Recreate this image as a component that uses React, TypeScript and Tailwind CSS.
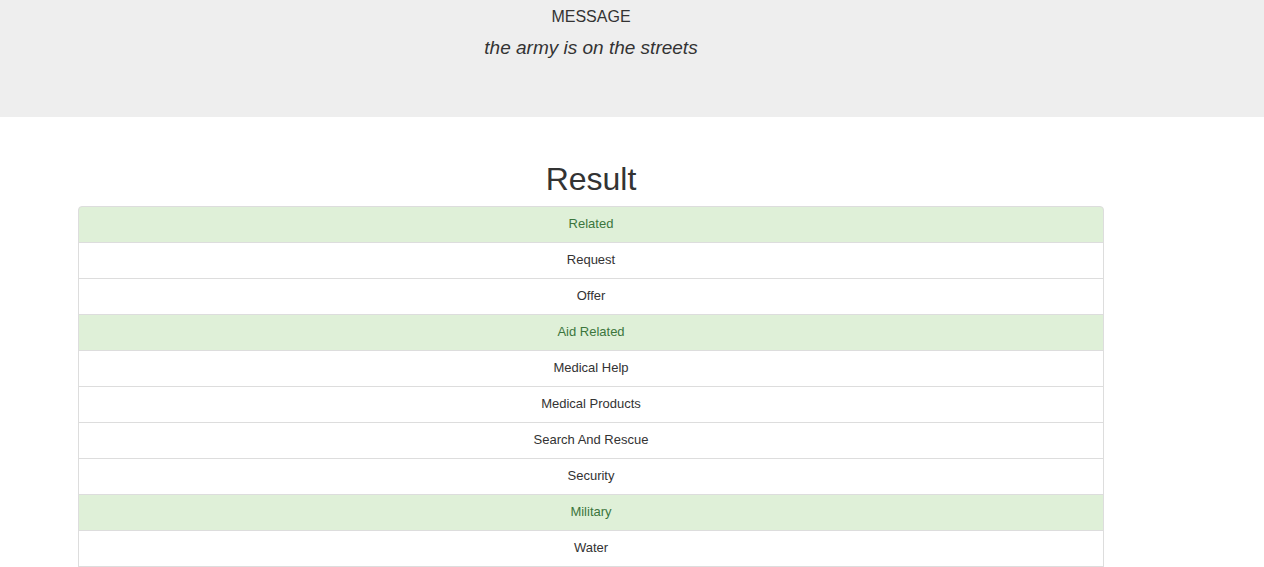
import React from 'react';

type Category = { name: string; hit: boolean };

const categories: Category[] = [
  { name: 'Related', hit: true },
  { name: 'Request', hit: false },
  { name: 'Offer', hit: false },
  { name: 'Aid Related', hit: true },
  { name: 'Medical Help', hit: false },
  { name: 'Medical Products', hit: false },
  { name: 'Search And Rescue', hit: false },
  { name: 'Security', hit: false },
  { name: 'Military', hit: true },
  { name: 'Water', hit: false },
  { name: 'Food', hit: false },
];

const App: React.FC = () => {
  return (
    <div className="h-[567px] overflow-hidden bg-white text-[#333] font-['Liberation_Sans',Arial,sans-serif]">
      <div className="h-[117px] bg-[#eee] pt-[6px]">
        <div className="w-[1026px] ml-[78px] text-center">
          <p className="text-[16px] leading-[22px] uppercase">Message</p>
          <p className="text-[19px] leading-[28px] italic mt-[6px]">the army is on the streets</p>
        </div>
      </div>

      <div className="w-[1026px] ml-[78px] pt-[44px]">
        <h1 className="text-[32px] leading-[36px] text-center mb-[9px]">Result</h1>
        <ul>
          {categories.map((c, i) => (
            <li
              key={c.name}
              className={
                'border border-[#ddd] -mb-px px-[15px] pt-[7px] pb-[9px] text-[13px] leading-[19px] text-center ' +
                (i === 0 ? 'rounded-t-[4px] ' : '') +
                (c.hit ? 'bg-[#dff0d8] text-[#3c763d]' : 'bg-white text-[#333]')
              }
            >
              {c.name}
            </li>
          ))}
        </ul>
      </div>
    </div>
  );
};

export default App;
